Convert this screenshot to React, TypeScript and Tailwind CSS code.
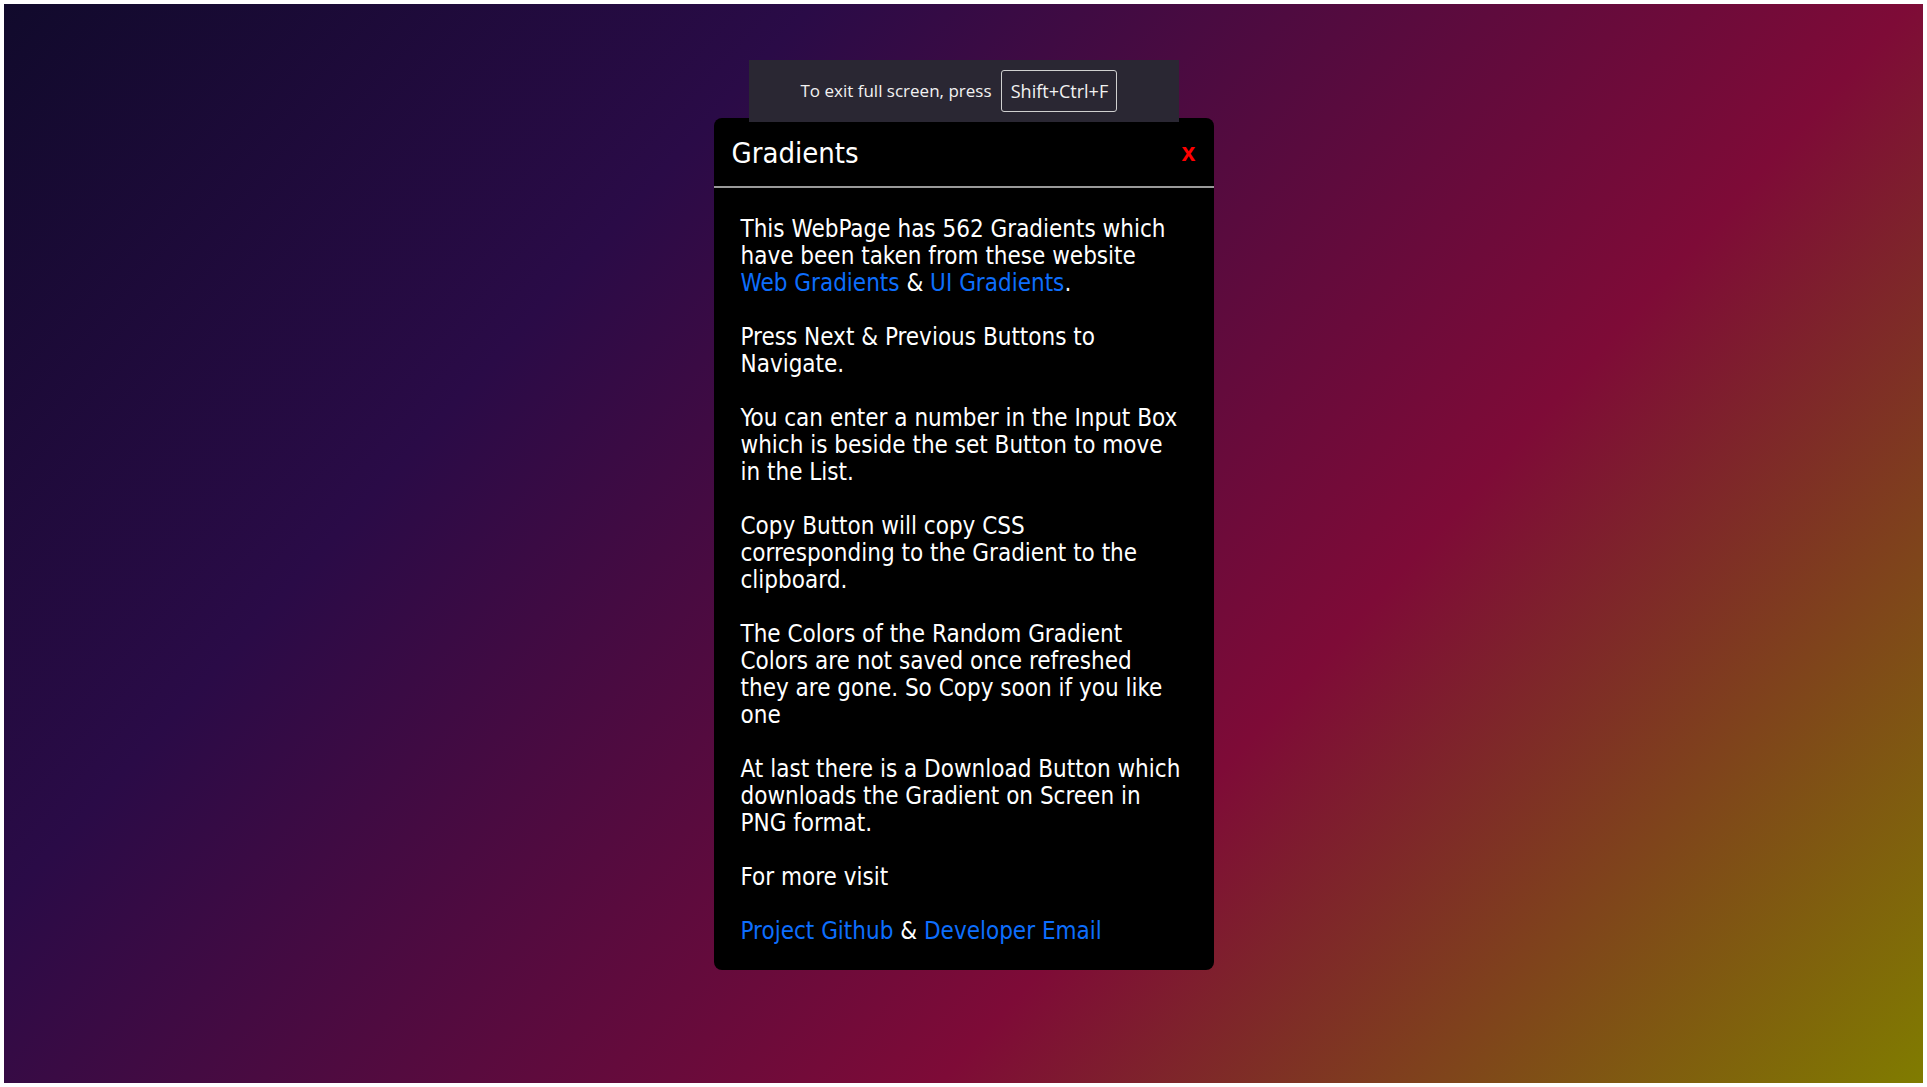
import React from "react"

const paragraphs: React.ReactNode[] = [
  <>
    This WebPage has 562 Gradients which
    <br />
    have been taken from these website
    <br />
    <a className="text-[#0d6efd]">Web Gradients</a> &amp;{" "}
    <a className="text-[#0d6efd]">UI Gradients</a>.
  </>,
  <>
    Press Next &amp; Previous Buttons to
    <br />
    Navigate.
  </>,
  <>
    You can enter a number in the Input Box
    <br />
    which is beside the set Button to move
    <br />
    in the List.
  </>,
  <>
    Copy Button will copy CSS
    <br />
    corresponding to the Gradient to the
    <br />
    clipboard.
  </>,
  <>
    The Colors of the Random Gradient
    <br />
    Colors are not saved once refreshed
    <br />
    they are gone. So Copy soon if you like
    <br />
    one
  </>,
  <>
    At last there is a Download Button which
    <br />
    downloads the Gradient on Screen in
    <br />
    PNG format.
  </>,
  <>For more visit</>,
  <>
    <a className="text-[#0d6efd]">Project Github</a> &amp;{" "}
    <a className="text-[#0d6efd]">Developer Email</a>
  </>,
]

export default function App() {
  return (
    <div className="bg-white p-1">
      <div className="relative flex h-[1079px] items-start justify-center bg-[linear-gradient(132deg,#110a2c_0%,#2a0b47_28%,#7e0b37_66%,#807c00_100%)] pt-[114px]">
        {/* fullscreen hint from the browser */}
        <div className="absolute left-1/2 top-[56px] z-10 flex h-[62px] w-[430px] -translate-x-1/2 items-center justify-center gap-[10px] bg-[#2a2733] pr-[9px] font-['Open_Sans',sans-serif] text-[17px] text-[#f2f2f2]">
          <span>To exit full screen, press</span>
          <span className="flex h-[42px] w-[116px] items-center justify-center rounded-[3px] border border-[#d0d0d0] text-[18px]">
            Shift+Ctrl+F
          </span>
        </div>

        <div className="w-[500px] rounded-lg bg-black pb-[25px] font-['DejaVu_Sans_Condensed','DejaVu_Sans',sans-serif] text-white">
          <div className="flex h-[70px] items-center justify-between border-b-2 border-[#9a9a9a] px-[18px]">
            <h1 className="mt-[4px] text-[29px]">Gradients</h1>
            <button className="font-['Liberation_Sans',sans-serif] text-[25px] font-bold leading-none text-[#ff0000]">
              x
            </button>
          </div>
          <div className="flex flex-col gap-[27px] px-[27px] pt-[28px] text-[24px] leading-[27px]">
            {paragraphs.map((p, i) => (
              <p key={i}>{p}</p>
            ))}
          </div>
        </div>
      </div>
    </div>
  )
}
